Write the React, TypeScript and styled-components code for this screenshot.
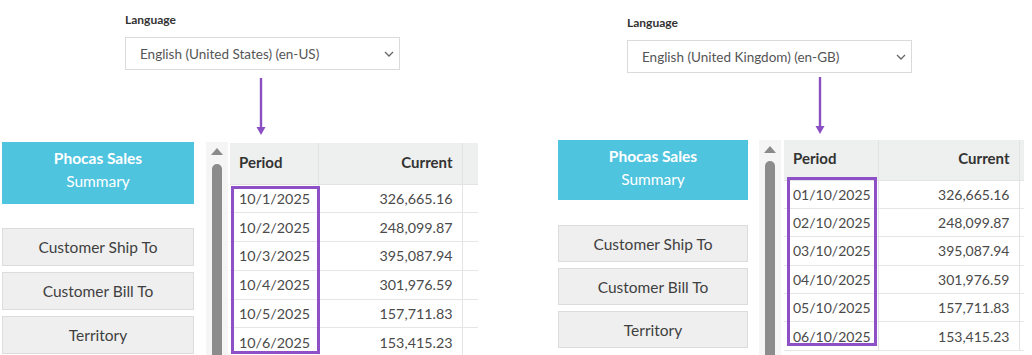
import { FC } from "react";
import styled, { createGlobalStyle } from "styled-components";

type Row = { period: string; current: string };

type Spec = {
  width: number;
  language: string;
  labelTop: number;
  selectX: number;
  selectW: number;
  arrowX: number;
  arrowH: number;
  arrowTop: number;
  dashX: number;
  sideW: number;
  cardH: number;
  btnGap: number;
  btnH: number;
  scrollGap: number;
  thumbTop: number;
  tableGap: number;
  tableTop: number;
  tableW: number;
  periodW: number;
  currentW: number;
  headH: number;
  rowH: number;
  cellFs: number;
  mark: { left: number; top: number; width: number; height: number };
  rows: Row[];
};

const amounts = ["326,665.16", "248,099.87", "395,087.94", "301,976.59", "157,711.83", "153,415.23"];

const usRows: Row[] = amounts.map((a, i) => ({ period: `10/${i + 1}/2025`, current: a }));
const gbRows: Row[] = amounts.map((a, i) => ({ period: `0${i + 1}/10/2025`, current: a }));

const panels: Spec[] = [
  {
    width: 540, language: "English (United States) (en-US)",
    labelTop: 13, selectX: 125, selectW: 275,
    arrowX: 261, arrowH: 72, arrowTop: 8,
    dashX: 2, sideW: 192, cardH: 62, btnGap: 24, btnH: 38,
    scrollGap: 12, thumbTop: 22,
    tableGap: 2, tableTop: 1, tableW: 248, periodW: 88, currentW: 144,
    headH: 41, rowH: 28.8, cellFs: 14.3,
    mark: { left: 1, top: 43, width: 89, height: 168 },
    rows: usRows,
  },
  {
    width: 492, language: "English (United Kingdom) (en-GB)",
    labelTop: 16, selectX: 87, selectW: 285,
    arrowX: 280, arrowH: 67, arrowTop: 4,
    dashX: 18, sideW: 190, cardH: 60, btnGap: 25, btnH: 37,
    scrollGap: 11, thumbTop: 21,
    tableGap: 3, tableTop: 0, tableW: 240, periodW: 94, currentW: 141,
    headH: 40, rowH: 28.4, cellFs: 14,
    mark: { left: 3, top: 37, width: 90, height: 169 },
    rows: gbRows,
  },
];

const Chevron = () => (
  <svg width="10" height="6" viewBox="0 0 10 6">
    <path d="M1 1 L5 5 L9 1" fill="none" stroke="#666" strokeWidth="1.3" />
  </svg>
);

const DownArrow: FC<{ h: number; top: number }> = ({ h, top }) => {
  const tip = top + 57;
  return (
    <svg width="12" height={h} viewBox={`0 0 12 ${h}`}>
      <line x1="6" y1={top} x2="6" y2={tip - 7} stroke="#8b4fc4" strokeWidth="2.4" />
      <polygon points={`1.5,${tip - 8} 10.5,${tip - 8} 6,${tip}`} fill="#8b4fc4" />
    </svg>
  );
};

const Panel: FC<{ s: Spec }> = ({ s }) => (
  <Spanel $w={s.width}>
    <Slang $top={s.labelTop} $x={s.selectX}>
      <Slabel>Language</Slabel>
      <Sselect $w={s.selectW}>
        <span>{s.language}</span>
        <Chevron />
      </Sselect>
    </Slang>
    <Sarrow $x={s.arrowX - 6} $h={s.arrowH}>
      <DownArrow h={s.arrowH} top={s.arrowTop} />
    </Sarrow>
    <Sdash $x={s.dashX}>
      <Sside $w={s.sideW}>
        <Scard $h={s.cardH}>
          <b>Phocas Sales</b>
          <span>Summary</span>
        </Scard>
        <Sbuttons $gap={s.btnGap}>
          <Sbtn $h={s.btnH}>Customer Ship To</Sbtn>
          <Sbtn $h={s.btnH}>Customer Bill To</Sbtn>
          <Sbtn $h={s.btnH}>Territory</Sbtn>
        </Sbuttons>
      </Sside>
      <Sscroll $gap={s.scrollGap}>
        <Sup />
        <Sthumb $top={s.thumbTop} />
      </Sscroll>
      <Stablewrap $gap={s.tableGap} $top={s.tableTop} $w={s.tableW}>
        <Stable $fs={s.cellFs} $w={s.periodW + s.currentW + 60}>
          <colgroup>
            <col style={{ width: s.periodW }} />
            <col style={{ width: s.currentW }} />
            <col style={{ width: 60 }} />
          </colgroup>
          <thead>
            <Shead $h={s.headH}>
              <th>Period</th>
              <th className="num">Current</th>
              <th />
            </Shead>
          </thead>
          <tbody>
            {s.rows.map((r) => (
              <Srow key={r.period} $h={s.rowH}>
                <td>{r.period}</td>
                <td className="num">{r.current}</td>
                <td />
              </Srow>
            ))}
          </tbody>
        </Stable>
        <Smark
          $left={s.mark.left}
          $top={s.mark.top}
          $w={s.mark.width}
          $h={s.mark.height}
        />
      </Stablewrap>
    </Sdash>
  </Spanel>
);

export default function App() {
  return (
    <>
      <GlobalStyle />
      <Spage>
        {panels.map((p) => (
          <Panel key={p.language} s={p} />
        ))}
      </Spage>
    </>
  );
}

const GlobalStyle = createGlobalStyle`
  html, body {
    margin: 0;
    padding: 0;
    background: #fff;
  }
  body {
    font-family: Lato, "Open Sans", "Liberation Sans", sans-serif;
    color: #444;
  }
`;

const Spage = styled.div`
  display: flex;
  width: 1032px;
  height: 355px;
  overflow: hidden;
`;

const Spanel = styled.section<{ $w: number }>`
  flex: none;
  width: ${(p) => p.$w}px;
  height: 355px;
  display: flex;
  flex-direction: column;
  overflow: hidden;
`;

const Slang = styled.div<{ $top: number; $x: number }>`
  padding: ${(p) => p.$top}px 0 0 ${(p) => p.$x}px;
`;

const Slabel = styled.div`
  font-size: 12px;
  line-height: 14px;
  font-weight: 700;
  color: #333;
  margin-bottom: 10px;
`;

const Sselect = styled.div<{ $w: number }>`
  box-sizing: border-box;
  width: ${(p) => p.$w}px;
  height: 33px;
  border: 1px solid #dadada;
  background: #fff;
  display: flex;
  align-items: center;
  justify-content: space-between;
  padding: 0 5px 0 14px;
  font-size: 13.5px;
  color: #555;
`;

const Sarrow = styled.div<{ $x: number; $h: number }>`
  height: ${(p) => p.$h}px;
  padding-left: ${(p) => p.$x}px;
  svg {
    display: block;
  }
`;

const Sdash = styled.div<{ $x: number }>`
  flex: 1;
  display: flex;
  align-items: stretch;
  padding-left: ${(p) => p.$x}px;
`;

const Sside = styled.div<{ $w: number }>`
  flex: none;
  width: ${(p) => p.$w}px;
  display: flex;
  flex-direction: column;
`;

const Scard = styled.div<{ $h: number }>`
  height: ${(p) => p.$h}px;
  box-sizing: border-box;
  background: #4fc4df;
  color: #fff;
  font-size: 15.5px;
  line-height: 22.5px;
  padding-top: 5px;
  display: flex;
  flex-direction: column;
  align-items: center;
  b {
    font-weight: 700;
  }
`;

const Sbuttons = styled.div<{ $gap: number }>`
  margin-top: ${(p) => p.$gap}px;
  display: flex;
  flex-direction: column;
  gap: 6px;
`;

const Sbtn = styled.div<{ $h: number }>`
  height: ${(p) => p.$h}px;
  box-sizing: border-box;
  background: #efefef;
  border: 1px solid #dcdcdc;
  display: flex;
  align-items: center;
  justify-content: center;
  font-size: 15.5px;
  color: #3f3f3f;
`;

const Sscroll = styled.div<{ $gap: number }>`
  flex: none;
  width: 22px;
  margin-left: ${(p) => p.$gap}px;
  background: #f5f5f5;
  display: flex;
  flex-direction: column;
  align-items: center;
  padding-top: 6px;
  box-sizing: border-box;
`;

const Sup = styled.div`
  width: 0;
  height: 0;
  border-left: 6px solid transparent;
  border-right: 6px solid transparent;
  border-bottom: 7px solid #8a8a8a;
`;

const Sthumb = styled.div<{ $top: number }>`
  width: 10px;
  flex: 1;
  margin-top: ${(p) => p.$top - 13}px;
  background: #8c8c8c;
  border-radius: 5px 5px 0 0;
`;

const Stablewrap = styled.div<{ $gap: number; $top: number; $w: number }>`
  flex: none;
  position: relative;
  width: ${(p) => p.$w}px;
  margin-left: ${(p) => p.$gap}px;
  margin-top: ${(p) => p.$top}px;
  overflow: hidden;
`;

const Stable = styled.table<{ $fs: number; $w: number }>`
  border-collapse: collapse;
  table-layout: fixed;
  width: ${(p) => p.$w}px;
  font-size: ${(p) => p.$fs}px;
  td, th {
    padding: 0 9px;
    border-right: 1px solid #e3e3e3;
    white-space: nowrap;
    text-align: left;
  }
  .num {
    text-align: right;
  }
`;

const Shead = styled.tr<{ $h: number }>`
  height: ${(p) => p.$h}px;
  background: #eeefef;
  th {
    font-weight: 700;
    font-size: 15px;
    color: #333;
    padding-bottom: 3px;
    border-bottom: 1px solid #e3e3e3;
  }
`;

const Srow = styled.tr<{ $h: number }>`
  height: ${(p) => p.$h}px;
  td {
    color: #4a4a4a;
    border-bottom: 1px solid #e6e6e6;
  }
`;

const Smark = styled.div<{ $left: number; $top: number; $w: number; $h: number }>`
  position: absolute;
  left: ${(p) => p.$left}px;
  top: ${(p) => p.$top}px;
  width: ${(p) => p.$w}px;
  height: ${(p) => p.$h}px;
  box-sizing: border-box;
  border: 3px solid #8d50c6;
  pointer-events: none;
`;
